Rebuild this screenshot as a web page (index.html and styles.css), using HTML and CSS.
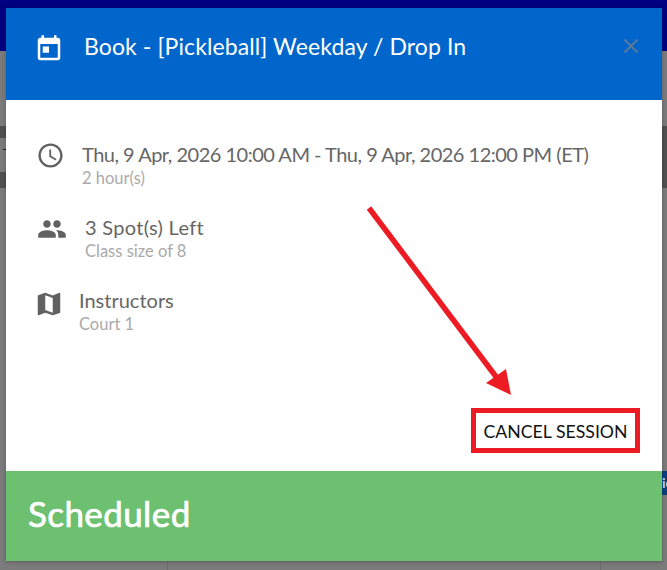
FILE: index.html
```html
<!DOCTYPE html>
<html lang="en">
<head>
    <meta charset="UTF-8">
    <title>Book session</title>
    <meta name="viewport" content="width=device-width, initial-scale=1.0">
    <link rel="stylesheet" href="styles.css">
</head>
<body>
    <!-- page behind the modal, mostly hidden -->
    <div class="backdrop">
        <div class="topbar"></div>
        <div class="band"></div>
        <div class="band-gap"><div class="tick"></div></div>
        <div class="col-line line-a"></div>
        <div class="col-line line-b"></div>
        <div class="tab-edge">ic</div>
    </div>

    <div class="modal">
        <header class="modal-head">
            <svg class="head-icon" viewBox="0 0 24 24"><path d="M19 3h-1V1h-2v2H8V1H6v2H5c-1.11 0-1.99.9-1.99 2L3 19c0 1.1.89 2 2 2h14c1.1 0 2-.9 2-2V5c0-1.1-.9-2-2-2zm0 16H5V8h14v11zM7 10h5v5H7z"/></svg>
            <h2 class="modal-title">Book - [Pickleball] Weekday / Drop In</h2>
            <svg class="close-icon" viewBox="0 0 14 14"><path d="M0.5 0.5L13.5 13.5M13.5 0.5L0.5 13.5"/></svg>
        </header>

        <div class="modal-body">
            <div class="info-row row-time">
                <svg class="info-icon" viewBox="0 0 24 24"><path d="M11.99 2C6.47 2 2 6.48 2 12s4.47 10 9.99 10C17.52 22 22 17.52 22 12S17.52 2 11.99 2zM12 20c-4.42 0-8-3.58-8-8s3.58-8 8-8 8 3.58 8 8-3.58 8-8 8zm.5-13H11v6l5.25 3.15.75-1.23-4.5-2.67z"/></svg>
                <div>
                    <div class="info-title">Thu, 9 Apr, 2026 10:00 AM - Thu, 9 Apr, 2026 12:00 PM (ET)</div>
                    <div class="info-sub">2 hour(s)</div>
                </div>
            </div>
            <div class="info-row row-spots">
                <svg class="info-icon" viewBox="0 0 24 24"><path d="M16 11c1.66 0 2.99-1.34 2.99-3S17.66 5 16 5c-1.66 0-3 1.34-3 3s1.34 3 3 3zm-8 0c1.66 0 2.99-1.34 2.99-3S9.66 5 8 5C6.34 5 5 6.34 5 8s1.34 3 3 3zm0 2c-2.33 0-7 1.17-7 3.5V19h14v-2.5c0-2.33-4.67-3.5-7-3.5zm8 0c-.29 0-.62.02-.97.05 1.16.84 1.97 1.97 1.97 3.45V19h6v-2.5c0-2.33-4.67-3.5-7-3.5z"/></svg>
                <div>
                    <div class="info-title">3 Spot(s) Left</div>
                    <div class="info-sub">Class size of 8</div>
                </div>
            </div>
            <div class="info-row row-court">
                <svg class="info-icon" viewBox="0 0 24 24"><path d="M20.5 3l-.16.03L15 5.1 9 3 3.36 4.9c-.21.07-.36.25-.36.48V20.5c0 .28.22.5.5.5l.16-.03L9 18.9l6 2.1 5.64-1.9c.21-.07.36-.25.36-.48V3.5c0-.28-.22-.5-.5-.5zM15 19l-6-2.11V5l6 2.11V19z"/></svg>
                <div>
                    <div class="info-title">Instructors</div>
                    <div class="info-sub">Court 1</div>
                </div>
            </div>
            <div class="actions">
                <button class="cancel-btn">CANCEL SESSION</button>
            </div>
        </div>

        <footer class="modal-foot">Scheduled</footer>
    </div>

    <!-- annotation arrow drawn over the screenshot -->
    <svg class="arrow" viewBox="0 0 667 570">
        <path class="arrow-line" d="M369 208L497 378"/>
        <path class="arrow-head" d="M511 395L486 383L506 369z"/>
    </svg>
</body>
</html>
```

FILE: styles.css
```css
body {
    margin: 0;
    height: 570px;
    overflow: hidden;
    position: relative;
    background: #7b7b7b;
    font-family: 'Lato', 'Liberation Sans', sans-serif;
}
.backdrop {
    position: absolute;
    inset: 0;
}
.topbar {
    height: 51px;
    background: #000080;
}
.band {
    margin-top: 75px;
    height: 62px;
    background: #505050;
}
.band-gap {
    position: absolute;
    left: 0;
    top: 138px;
    width: 6px;
    height: 34px;
    background: #7b7b7b;
}
.tick {
    margin: 11px 0 0 3px;
    height: 1px;
    background: #222;
}
.col-line {
    position: absolute;
    top: 561px;
    width: 1px;
    height: 9px;
    background: #6c6c6c;
}
.line-a {
    left: 167px;
}
.line-b {
    left: 600px;
}
.tab-edge {
    position: absolute;
    top: 471px;
    right: 0;
    width: 5px;
    height: 24px;
    background: #0b3f80;
    color: #c8d4e4;
    font-size: 14px;
    font-weight: bold;
    line-height: 24px;
    overflow: hidden;
}
.modal {
    position: absolute;
    left: 6px;
    top: 8px;
    width: 656px;
    height: 553px;
    display: flex;
    flex-direction: column;
    background: #fff;
    box-shadow: 0 1px 4px #0004;
}
.modal-head {
    height: 92px;
    flex-shrink: 0;
    background: #0066cc;
    display: flex;
    align-items: flex-start;
    color: #fff;
}
.head-icon {
    width: 30px;
    height: 30px;
    margin: 26px 0 0 28px;
    fill: #fff;
}
.modal-title {
    margin: 23px 0 0 20px;
    font-size: 23px;
    line-height: 30px;
    font-weight: 400;
    letter-spacing: 0.1px;
    flex: 1;
}
.close-icon {
    width: 14px;
    height: 14px;
    margin: 31px 24px 0 0;
    fill: none;
    stroke: #6a7c90;
    stroke-width: 1.6;
}
.modal-body {
    flex: 1;
    padding: 41px 22px 0 28px;
    display: flex;
    flex-direction: column;
}
.info-row {
    display: flex;
    align-items: flex-start;
}
.info-icon {
    width: 30px;
    height: 30px;
    fill: #616161;
    flex-shrink: 0;
}
.info-title {
    font-size: 20px;
    line-height: 27px;
    color: #666;
}
.info-sub {
    font-size: 16.5px;
    line-height: 21px;
    color: #aaa;
}
.row-time .info-icon {
    margin: 0 17px 0 2px;
    width: 29px;
    height: 29px;
}
.row-time .info-title {
    letter-spacing: -0.5px;
}
.row-spots {
    margin-top: 25px;
}
.row-spots .info-icon {
    margin: 0 18px 0 3px;
}
.row-spots .info-title {
    letter-spacing: 0.3px;
}
.row-court {
    margin-top: 25px;
}
.row-court .info-icon {
    margin: 2px 15px 0 0;
}
.actions {
    margin-top: auto;
    padding-bottom: 18px;
    display: flex;
    justify-content: flex-end;
}
.cancel-btn {
    width: 169px;
    height: 45px;
    padding: 2px 0 0;
    background: #fff;
    border: 5px solid #ed1c24;
    font-family: inherit;
    font-size: 17.7px;
    color: #111;
}
.modal-foot {
    height: 90px;
    flex-shrink: 0;
    box-sizing: border-box;
    padding: 23px 0 0 22px;
    background: #6cc070;
    color: #fff;
    font-size: 35px;
    line-height: 38px;
    font-weight: 400;
    letter-spacing: 0.4px;
    -webkit-text-stroke: 0.7px #fff;
}
.arrow {
    position: absolute;
    left: 0;
    top: 0;
    width: 667px;
    height: 570px;
}
.arrow-line {
    fill: none;
    stroke: #ed1c24;
    stroke-width: 5.5;
}
.arrow-head {
    fill: #ed1c24;
}
```
